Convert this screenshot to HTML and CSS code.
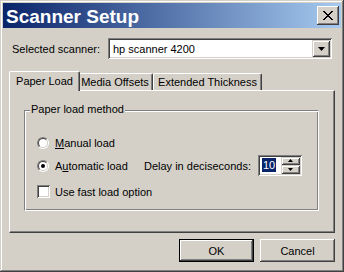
FILE: index.html
```html
<!DOCTYPE html>
<html>
<head>
<meta charset="utf-8">
<link rel="stylesheet" href="styles.css">
</head>
<body>
<div class="window">
  <div class="titlebar">
    <span class="title">Scanner Setup</span>
    <span class="close"><svg width="10" height="9" viewBox="0 0 10 9"><path d="M0 0h2v1H0zM8 0h2v1H8zM1 1h2v1H1zM7 1h2v1H7zM2 2h2v1H2zM6 2h2v1H6zM3 3h4v1H3zM4 4h2v1H4zM3 5h4v1H3zM2 6h2v1H2zM6 6h2v1H6zM1 7h2v1H1zM7 7h2v1H7zM0 8h2v1H0zM8 8h2v1H8z" fill="#000"/></svg></span>
  </div>
  <div class="client">
    <div class="scanner-row">
      <span class="lbl">Selected scanner:</span>
      <div class="combo">
        <span class="combo-text">hp scanner 4200</span>
        <span class="drop"><svg width="7" height="4" viewBox="0 0 7 4"><path d="M0 0h7L3.5 4z" fill="#000"/></svg></span>
      </div>
    </div>
    <div class="tabs">
      <div class="tab sel tab-load">Paper Load</div>
      <div class="tab tab-media">Media Offsets</div>
      <div class="tab tab-thick">Extended Thickness</div>
    </div>
    <div class="panel">
      <div class="group">
        <span class="group-label">Paper load method</span>
        <div class="row">
          <span class="radio"><span class="radio-in"></span></span>
          <span class="opt-text"><u>M</u>anual load</span>
        </div>
        <div class="row">
          <span class="opt">
            <span class="radio"><span class="radio-in"><span class="dot"></span></span></span>
            <span class="opt-text">A<u>u</u>tomatic load</span>
          </span>
          <span class="delay">Delay in deciseconds:</span>
          <div class="spin">
            <span class="spin-field"><span class="sel-text">10</span></span>
            <span class="spin-btns">
              <span class="spin-btn"><svg width="5" height="3" viewBox="0 0 5 3"><path d="M2.5 0L5 3H0z" fill="#000"/></svg></span>
              <span class="spin-btn"><svg width="5" height="3" viewBox="0 0 5 3"><path d="M0 0h5L2.5 3z" fill="#000"/></svg></span>
            </span>
          </div>
        </div>
        <div class="row check-row">
          <span class="check"></span>
          <span class="check-text">Use fast load option</span>
        </div>
      </div>
    </div>
    <div class="buttons">
      <span class="btn default"><span class="btn-in">OK</span></span>
      <span class="btn"><span class="btn-in">Cancel</span></span>
    </div>
  </div>
</div>
</body>
</html>
```

FILE: styles.css
```css
* { box-sizing: border-box; }
html, body { margin: 0; padding: 0; }
body {
  width: 344px;
  height: 272px;
  overflow: hidden;
  background: #d4d0c8;
  font-family: "Liberation Sans", Arial, sans-serif;
  font-size: 11px;
  color: #000;
}
.window {
  width: 344px;
  height: 272px;
  padding: 3px;
  background: #d4d0c8;
  box-shadow: inset -1px -1px 0 #404040, inset 1px 1px 0 #d4d0c8, inset -2px -2px 0 #808080, inset 2px 2px 0 #fff;
  display: flex;
  flex-direction: column;
}
.titlebar {
  height: 25px;
  flex: none;
  background: linear-gradient(to right, #0a246a, #a6caf0);
  display: flex;
  align-items: center;
  justify-content: space-between;
  padding: 0 2px 0 3px;
}
.title {
  color: #fff;
  font-weight: bold;
  font-size: 19px;
  line-height: 25px;
  padding-top: 1px;
}
.close {
  width: 22px;
  height: 19px;
  background: #d4d0c8;
  box-shadow: inset -1px -1px 0 #404040, inset 1px 1px 0 #fff, inset -2px -2px 0 #808080;
  display: flex;
  align-items: center;
  justify-content: center;
}
.close svg { display: block; margin-top: -1px; }
.client {
  flex: 1;
  display: flex;
  flex-direction: column;
  padding: 10px 6px 0 6px;
}
.scanner-row {
  display: flex;
  align-items: center;
  height: 21px;
  padding: 0 3px;
}
.lbl { flex: 1; }
.combo {
  width: 224px;
  height: 21px;
  background: #fff;
  box-shadow: inset 1px 1px 0 #808080, inset -1px -1px 0 #fff, inset 2px 2px 0 #404040, inset -2px -2px 0 #d4d0c8;
  display: flex;
  align-items: center;
  padding: 2px;
}
.combo-text { padding-left: 3px; flex: 1; }
.drop {
  width: 18px;
  height: 17px;
  background: #d4d0c8;
  box-shadow: inset 1px 1px 0 #d4d0c8, inset -1px -1px 0 #404040, inset 2px 2px 0 #fff, inset -2px -2px 0 #808080;
  display: flex;
  align-items: center;
  justify-content: center;
}
.drop svg { display: block; }
.tabs {
  display: flex;
  align-items: flex-end;
  height: 19px;
  margin-top: 12px;
  padding-left: 2px;
  position: relative;
  z-index: 1;
}
.tab {
  height: 17px;
  background: #d4d0c8;
  border-top: 1px solid #fff;
  border-left: 1px solid #fff;
  border-right: 1px solid #404040;
  border-radius: 2px 2px 0 0;
  box-shadow: inset -1px 0 0 #808080;
  display: flex;
  align-items: center;
  justify-content: center;
  white-space: nowrap;
  padding-bottom: 1px;
}
.tab.sel {
  height: 20px;
  margin: 0 -2px -1px -2px;
  position: relative;
  z-index: 2;
  padding-bottom: 2px;
}
.tab-load { width: 71px; }
.tab-media { width: 75px; border-left: none; }
.tab-thick { width: 109px; }
.panel {
  height: 143px;
  flex: none;
  background: #d4d0c8;
  border-top: 1px solid #fff;
  border-left: 1px solid #fff;
  border-right: 1px solid #404040;
  border-bottom: 1px solid #404040;
  box-shadow: inset -1px -1px 0 #808080;
  padding: 19px 15px 0 14px;
}
.group {
  position: relative;
  height: 101px;
  border: 1px solid;
  border-color: #808080 #fff #fff #808080;
  box-shadow: inset 1px 1px 0 #fff, inset -1px -1px 0 #808080;
  padding: 20px 0 0 12px;
}
.group-label {
  position: absolute;
  top: -8px;
  left: 5px;
  padding: 0 1px;
  line-height: 13px;
  background: #d4d0c8;
}
.row {
  display: flex;
  align-items: center;
  height: 23px;
}
.check-row { margin-top: 3px; }
.opt { display: flex; align-items: center; width: 107px; }
.radio {
  width: 12px;
  height: 12px;
  border-radius: 50%;
  border: 1px solid;
  border-color: #808080 #fff #fff #808080;
  flex: none;
}
.radio-in {
  display: flex;
  align-items: center;
  justify-content: center;
  width: 10px;
  height: 10px;
  border-radius: 50%;
  border: 1px solid;
  border-color: #404040 #d4d0c8 #d4d0c8 #404040;
  background: #fff;
}
.dot {
  width: 4px;
  height: 4px;
  border-radius: 50%;
  background: #000;
}
.opt-text { margin-left: 6px; }
.delay { width: 114px; }
.spin {
  width: 44px;
  height: 21px;
  background: #fff;
  box-shadow: inset 1px 1px 0 #808080, inset -1px -1px 0 #fff, inset 2px 2px 0 #404040, inset -2px -2px 0 #d4d0c8;
  padding: 2px;
  display: flex;
  margin-top: -1px;
}
.spin-field {
  flex: 1;
  display: flex;
  align-items: center;
  padding-left: 2px;
}
.sel-text {
  background: #0a246a;
  color: #fff;
  line-height: 14px;
  padding: 0 1px;
}
.spin-btns {
  width: 19px;
  display: flex;
  flex-direction: column;
}
.spin-btn {
  flex: 1;
  background: #d4d0c8;
  box-shadow: inset 1px 1px 0 #d4d0c8, inset -1px -1px 0 #404040, inset 2px 2px 0 #fff, inset -2px -2px 0 #808080;
  display: flex;
  align-items: center;
  justify-content: center;
}
.spin-btn svg { display: block; }
.check {
  width: 13px;
  height: 13px;
  flex: none;
  background: #fff;
  box-shadow: inset 1px 1px 0 #808080, inset -1px -1px 0 #fff, inset 2px 2px 0 #404040, inset -2px -2px 0 #d4d0c8;
}
.check-text { margin-left: 5px; }
.buttons {
  display: flex;
  justify-content: flex-end;
  gap: 6px;
  margin-top: 6px;
}
.btn {
  width: 75px;
  height: 23px;
  background: #d4d0c8;
  box-shadow: inset -1px -1px 0 #404040, inset 1px 1px 0 #fff, inset -2px -2px 0 #808080;
  display: flex;
}
.btn-in {
  flex: 1;
  display: flex;
  align-items: center;
  justify-content: center;
}
.btn.default {
  border: 1px solid #000;
  box-shadow: none;
}
.btn.default .btn-in {
  box-shadow: inset -1px -1px 0 #404040, inset 1px 1px 0 #fff, inset -2px -2px 0 #808080;
}
```
